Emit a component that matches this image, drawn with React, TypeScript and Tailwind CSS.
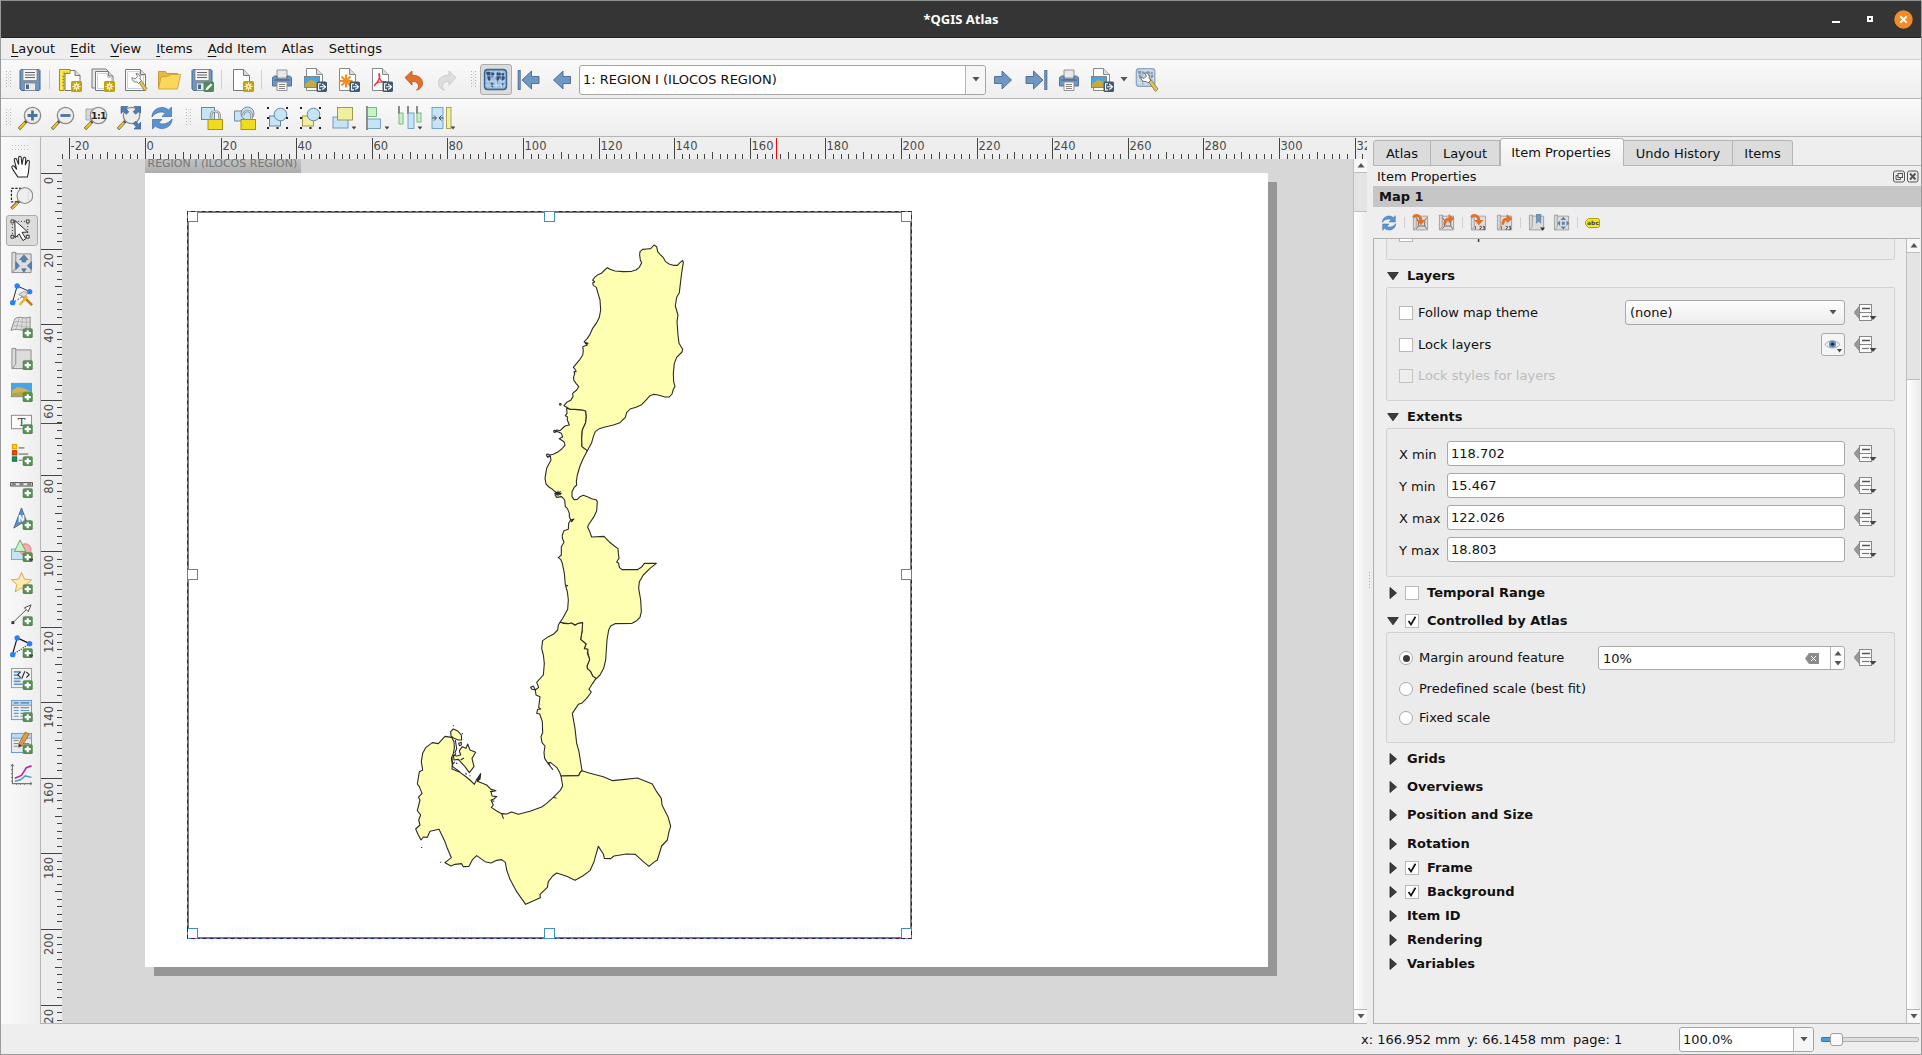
import React from "react";

type Kids = { children?: React.ReactNode };

const Ico = ({ s = 24, children }: Kids & { s?: number }) => (
  <svg width={s} height={s} viewBox="0 0 24 24" fill="none" className="block shrink-0">
    {children}
  </svg>
);

/* ---------- badges ---------- */
const NewBadge = () => (
  <g>
    <rect x="13" y="13" width="11" height="11" rx="1.6" fill="#c4a000" />
    <path d="M18.5 14.2v8.6M14.2 18.5h8.6M15.6 15.6l5.8 5.8M21.4 15.6l-5.8 5.8" stroke="#fff6c8" strokeWidth="1.2" />
    <circle cx="18.5" cy="18.5" r="2.4" fill="#fff6c8" />
    <circle cx="18.5" cy="18.5" r="1" fill="#c4a000" />
  </g>
);
const ExportBadge = () => (
  <g>
    <rect x="13.5" y="13.5" width="10.5" height="10.5" rx="1.6" fill="#3d5a73" />
    <path d="M18 15.7h-2.4v6.2H18M17 18.8h5.2M20.3 16.6l2.2 2.2-2.2 2.2M19.6 15.8v1.4M19.6 20.4v1.4" stroke="#fff" strokeWidth="1.1" />
  </g>
);
const PlusBadge = () => (
  <g>
    <rect x="13.5" y="14" width="10" height="10" rx="1.6" fill="#588f54" stroke="#47793f" strokeWidth=".4" />
    <path d="M18.5 15.8v6.4M15.3 19h6.4" stroke="#fff" strokeWidth="2.3" />
  </g>
);
const DropMark = () => <path d="M19.5 20.5h5l-2.5 3z" fill="#444" />;

/* ---------- toolbar icons ---------- */
const Floppy = () => (
  <g>
    <path d="M3 1.5h18l1 1v19l-1 1H3.500L2 21V2.500z" fill="#6d97c4" stroke="#48698f" strokeWidth="1" />
    <rect x="5" y="1.500" width="14" height="11" fill="#f3f3f3" stroke="#7d7d7d" strokeWidth=".7" />
    <path d="M7 4.500h10M7 7h10M7 9.500h10" stroke="#666" strokeWidth="1" />
    <rect x="6.500" y="15" width="11" height="7.500" fill="#e9e9e9" stroke="#7d7d7d" strokeWidth=".7" />
    <rect x="8" y="16.500" width="3" height="4.500" fill="#48698f" />
  </g>
);
const SaveIcon = () => <Ico><Floppy /></Ico>;
const SaveTemplateIcon = () => (
  <Ico>
    <Floppy />
    <rect x="13.500" y="13.500" width="10.500" height="10.500" rx="1.600" fill="#4e8b57" />
    <path d="M15.500 22.300l.8-2.500 4.500-4.400 1.600 1.600-4.500 4.400z" fill="#fff" />
  </Ico>
);
const NewLayoutIcon = () => (
  <Ico>
    <path d="M7 2.500h10l5 5v15H7z" fill="#fff" stroke="#777" />
    <path d="M17 2.500v5h5" fill="#ddd" stroke="#777" />
    <path d="M1.500 1.500h10.500v4H6v17H1.500z" fill="#fce94f" stroke="#b08900" />
    <path d="M4 8.500h2M4 11.500h2M4 14.500h2M4 17.500h2M6 3.500v2M9 3.500v2" stroke="#b08900" strokeWidth=".8" />
    <NewBadge />
  </Ico>
);
const DuplicateIcon = () => (
  <Ico>
    <path d="M1 1h14l2 2v17H1z" fill="#e6e6e6" stroke="#777" />
    <path d="M4.500 3.500h13l4.500 4.500v14.500H4.500z" fill="#fff" stroke="#777" />
    <path d="M6.500 5.500h10v4h4v11h-14z" stroke="#b5c8e8" strokeWidth=".8" />
    <path d="M17.500 3.500V8H22" fill="#ddd" stroke="#777" />
    <NewBadge />
  </Ico>
);
const ManagerIcon = () => (
  <Ico>
    <path d="M1.500 1.500h15l5 5v16h-20z" fill="#fff" stroke="#777" />
    <path d="M3.500 3.500h12v4h4v13h-16z" stroke="#b5c8e8" strokeWidth=".8" />
    <path d="M16.500 1.500v5h5" fill="#ddd" stroke="#777" />
    <path d="M14.500 13.500l2-2 6.500 9-2.500 2.500z" fill="#e0c35a" stroke="#86762c" strokeWidth=".8" />
    <path d="M8 9.500a4 4 0 0 0 5 4.500l1.500 1.500 3-3-1.500-1.500a4 4 0 0 0-4-5.500l1.500 3-2.500 2.500z" fill="#f4f4f4" stroke="#666" strokeWidth=".8" />
  </Ico>
);
const FolderIcon = () => (
  <Ico>
    <path d="M1.500 20V3.500h7l1.500 2h10.500V20z" fill="#e9b93f" stroke="#b98c1f" strokeWidth=".8" />
    <path d="M1.500 21L4 9l8-1 2-1.500h9.500L20.500 21z" fill="#fbd85b" stroke="#c99d2c" strokeWidth=".8" />
  </Ico>
);
const PageNewIcon = () => (
  <Ico>
    <path d="M3.500 1.500h10l6 6v15h-16z" fill="#fff" stroke="#777" />
    <path d="M13.500 1.500v6h6" fill="#ddd" stroke="#777" />
    <NewBadge />
  </Ico>
);
const PrinterIcon = () => (
  <Ico>
    <path d="M7 2h10v8H7z" fill="#e8e8e8" stroke="#888" strokeWidth=".9" />
    <path d="M2.500 9.500l2-1.500H7v3h10V8h2.500l2 1.500v8.500h-19z" fill="#6d97c4" stroke="#48698f" strokeWidth=".9" />
    <path d="M4 12h16" stroke="#48698f" strokeWidth="1.200" />
    <path d="M7 14h10v8.500H7z" fill="#fafafa" stroke="#888" strokeWidth=".9" />
    <path d="M9 16.500h6M9 18.500h6M9 20.500h6" stroke="#777" strokeWidth=".9" />
  </Ico>
);
const ImageExportIcon = () => (
  <Ico>
    <path d="M3.500 .500h10l6 6v16h-16z" fill="#fff" stroke="#888" />
    <path d="M13.500 .500v6h6" fill="#ddd" stroke="#888" />
    <rect x="1.500" y="8.500" width="15" height="11" fill="#45a5e8" stroke="#777" strokeWidth=".8" />
    <path d="M2 19v-3l6-4.500 8 3.500v4z" fill="#c3ab41" />
    <ExportBadge />
  </Ico>
);
const SvgExportIcon = () => (
  <Ico>
    <path d="M3.500 .500h10l6 6v16h-16z" fill="#fff" stroke="#888" />
    <path d="M13.500 .500v6h6" fill="#ddd" stroke="#888" />
    <path d="M10 6.500v13M3.500 13h13M5.500 8.500l9 9M14.500 8.500l-9 9" stroke="#f38f1d" strokeWidth="2" />
    <ExportBadge />
  </Ico>
);
const PdfExportIcon = () => (
  <Ico>
    <path d="M3.500 .500h10l6 6v16h-16z" fill="#fff" stroke="#888" />
    <path d="M13.500 .500v6h6" fill="#ddd" stroke="#888" />
    <path d="M10 5c2 4-1 9-5 13M10 6c-.500 5 3 8.500 7.500 9.500M6 16c3-2 7-3 11.500-2" stroke="#e8323b" strokeWidth="1.400" />
    <ExportBadge />
  </Ico>
);
const ReturnArrow = ({ fill, stroke }: { fill: string; stroke: string }) => (
  <path d="M3 9.500l7-6.500v4.200c7 0 10.500 3.500 10.500 8 0 3.500-2.500 6-6 7 2-2 2.500-4 1.500-6-1-2-3-3-6-3v4z" fill={fill} stroke={stroke} strokeWidth=".8" />
);
const UndoIcon = () => <Ico><ReturnArrow fill="#e3702d" stroke="#b9531a" /></Ico>;
const RedoIcon = () => (
  <Ico><g transform="matrix(-1 0 0 1 24 0)"><ReturnArrow fill="#dededc" stroke="#c4c4c2" /></g></Ico>
);
const AtlasSheet = () => (
  <g>
    <path d="M2 3.500h20v17H2z" fill="#9fbfe0" />
    <path d="M3 5c3-1 6 0 8 1l-1 3-2 1-1 4-2-1-1-4zM13 5l7 1 1 5-3 3-2-4-2 5-2-4zM7 14l3 2-1 4-2-2zM17 15l3 1-1 3z" fill="#2f5078" />
    <path d="M7.500 3.500v17M12.500 3.500v17M17.500 3.500v17M2 8.500h20M2 13.500h20M2 17.500h20" stroke="#dfeaf5" strokeWidth=".6" />
    <rect x="1.500" y="2.500" width="21" height="19" rx="3" stroke="#3d6696" strokeWidth="1.500" />
  </g>
);
const AtlasIcon = () => <Ico s={25}><AtlasSheet /></Ico>;
const arrow = "M20.500 8.500h-7.500V3L3.500 12 13 21v-5.500h7.500z";
const NavIcon = ({ bar, flip }: { bar?: boolean; flip?: boolean }) => (
  <Ico>
    <g transform={flip ? "matrix(-1 0 0 1 24 0)" : undefined}>
      {bar ? (
        <g>
          <path d="M2.200 2v20" stroke="#48698f" strokeWidth="3" />
          <path d="M2.200 2.500v19" stroke="#6d97c4" strokeWidth="1.400" />
          <path d={arrow} transform="translate(1.500 0)" fill="#6d97c4" stroke="#48698f" strokeWidth=".9" />
        </g>
      ) : (
        <path d={arrow} fill="#6d97c4" stroke="#48698f" strokeWidth=".9" />
      )}
    </g>
  </Ico>
);
const AtlasSettingsIcon = () => (
  <Ico>
    <g opacity=".55"><g transform="translate(0 -1.500) scale(.88 .92)"><AtlasSheet /></g></g>
    <path d="M13 13l2.500-2 7.500 10-2.500 2.500z" fill="#e0c35a" stroke="#86762c" strokeWidth=".8" />
    <path d="M6 9a4 4 0 0 0 5 4.500l2 1.500 3-3-2-1.500a4 4 0 0 0-4.500-5.500l2 3-2.500 2.500z" fill="#fff" stroke="#555" strokeWidth=".8" />
  </Ico>
);
const Lens = ({ children }: Kids) => (
  <g>
    <path d="M8.500 15L1 23" stroke="#4a4a4a" strokeWidth="3.200" />
    <path d="M7 16.500l-5.500 6" stroke="#f5c21b" strokeWidth="2.200" />
    <circle cx="14.500" cy="9.500" r="8.200" fill="#ededeb" stroke="#8c8c8a" strokeWidth="1.300" />
    {children}
  </g>
);
const ZoomInIcon = () => <Ico><Lens><path d="M14.500 4.500v10M9.500 9.500h10" stroke="#48759f" strokeWidth="2.800" /></Lens></Ico>;
const ZoomOutIcon = () => <Ico><Lens><path d="M9.500 9.500h10" stroke="#48759f" strokeWidth="2.800" /></Lens></Ico>;
const ZoomOneIcon = () => (
  <Ico>
    <path d="M2 3h17v11H2z" fill="#d8d8d8" stroke="#999" strokeWidth=".8" />
    <Lens>
      <text x="14.400" y="13" textAnchor="middle" fontSize="9.500" fontWeight="bold" fill="#222" fontFamily="DejaVu Sans" letterSpacing="-.800">1:1</text>
    </Lens>
  </Ico>
);
const ZoomFullIcon = () => (
  <Ico>
    <Lens />
    <path d="M4 .500h7L8.800 2.800l3 3-2.500 2.500-3-3L4 7.500zM24 .500h-7l2.200 2.300-3 3 2.500 2.500 3-3L24 7.500zM24 23h-7l2.200-2.300-3-3 2.500-2.500 3 3L24 16z" fill="#4d7db5" stroke="#35567d" strokeWidth=".6" />
  </Ico>
);
const RefreshGlyph = () => (
  <g>
    <path d="M2 11C2 5 7 1.500 12 1.500c3 0 5 1 6.500 2.500L21.500 1v9.500H12l3.200-3.200C12.500 5 6 5.500 2 11z" fill="#5b93d0" stroke="#3a6ca8" strokeWidth=".7" />
    <path d="M22 13c0 6-5 9.500-10 9.500-3 0-5-1-6.500-2.500L2.500 23v-9.500H12l-3.200 3.200c2.700 2.300 9.200 1.800 13.200-3.700z" fill="#5b93d0" stroke="#3a6ca8" strokeWidth=".7" />
  </g>
);
const RefreshIcon = ({ s = 26 }: { s?: number }) => <Ico s={s}><RefreshGlyph /></Ico>;
const LockIcon = () => (
  <Ico>
    <rect x="1.500" y="1.500" width="13" height="12" fill="#c5e5f7" stroke="#5d7f98" strokeWidth=".9" />
    <path d="M11 14V9.500a4.300 4.300 0 0 1 8.600 0V14" stroke="#8a8a8a" strokeWidth="2.600" />
    <path d="M11 14V9.500a4.300 4.300 0 0 1 8.600 0V14" stroke="#d5d5d5" strokeWidth="1.200" />
    <rect x="8" y="13.500" width="14.500" height="10" fill="#f0dc1e" stroke="#ab930c" />
  </Ico>
);
const UnlockIcon = () => (
  <Ico>
    <path d="M1.500 5h11v10h-11z" fill="#c5e5f7" stroke="#5d7f98" strokeWidth=".9" />
    <circle cx="14.500" cy="7.500" r="6.500" fill="#c5e5f7" stroke="#5d7f98" strokeWidth=".9" />
    <path d="M10.500 9.500a4 4 0 0 1 8-1V14" stroke="#8a8a8a" strokeWidth="2.600" />
    <path d="M10.500 9.500a4 4 0 0 1 8-1V14" stroke="#d5d5d5" strokeWidth="1.200" />
    <rect x="8" y="13.500" width="14.500" height="10" fill="#f0dc1e" stroke="#ab930c" />
  </Ico>
);
const Corners = () => (
  <path d="M1 1h2v2H1zM20 1h2v2h-2zM1 21h2v2H1zM20 21h2v2h-2zM1 11h2v2H1zM20 11h2v2h-2zM10.500 21h2v2h-2z" fill="#222" />
);
const GroupIcon = ({ ungroup }: { ungroup?: boolean }) => (
  <Ico>
    <rect x="3.500" y="10" width="11" height="10" fill={ungroup ? "#f5ef9d" : "#c5e5f7"} stroke={ungroup ? "#999045" : "#5d7f98"} strokeWidth=".9" />
    <circle cx="14.500" cy="8.500" r="6.300" fill="#c5e5f7" stroke="#5d7f98" strokeWidth=".9" />
    <Corners />
  </Ico>
);
const RaiseIcon = () => (
  <Ico>
    <rect x="1" y="11" width="15" height="11" fill="#c5e5f7" stroke="#5d92b8" strokeWidth=".9" />
    <rect x="5.500" y="1.500" width="15" height="12.500" fill="#f1ee9e" stroke="#999045" strokeWidth=".9" />
    <DropMark />
  </Ico>
);
const AlignIcon = () => (
  <Ico>
    <path d="M2 0v24" stroke="#333" strokeWidth="1.100" />
    <rect x="2.500" y="1.500" width="9" height="9" fill="#c5f5c5" stroke="#6ba56b" strokeWidth=".8" />
    <rect x="2.500" y="13" width="13" height="9.500" fill="#c5e5f7" stroke="#5d92b8" strokeWidth=".8" />
    <DropMark />
  </Ico>
);
const DistributeIcon = () => (
  <Ico>
    <path d="M1 0v8M10 0v8M19 0v8" stroke="#333" strokeWidth="1.100" />
    <rect x="1" y="7" width="4" height="11" fill="#c5f5c5" stroke="#6ba56b" strokeWidth=".8" />
    <rect x="10" y="7" width="6" height="15.500" fill="#c5e5f7" stroke="#5d92b8" strokeWidth=".8" />
    <rect x="19" y="7" width="4" height="9" fill="#c5f5c5" stroke="#6ba56b" strokeWidth=".8" />
    <DropMark />
  </Ico>
);
const ResizeIcon = () => (
  <Ico>
    <rect x="1" y="1.500" width="11" height="21" fill="#c5e5f7" stroke="#5d92b8" strokeWidth=".8" />
    <rect x="15.500" y="1.500" width="4.500" height="21" fill="#f1ee9e" stroke="#999045" strokeWidth=".8" />
    <path d="M1 12h4M3 9.500L5.500 12 3 14.500M12.500 12h-4M10.500 9.500L8 12l2.500 2.500" stroke="#444" />
    <DropMark />
  </Ico>
);

/* ---------- toolbox icons ---------- */
const toolIcons: React.ReactNode[] = [
  <path key="pan" d="M8 23c-1-3-4-5-6-10-.5-1.500 1.500-2.500 2.800-.8L7 15 4.500 5.500C4 3.500 6.500 3 7 4.800L9 10V2.800C9 .8 11.500.8 11.700 2.800L12.500 10l1.300-6.500c.4-1.800 2.800-1.300 2.600.5L16 10.500l1.700-4c.7-1.600 2.800-1 2.500.8C19.500 13 20 18 18 23z" fill="#fff" stroke="#222" strokeWidth="1.100" />,
  <g key="zoom">
    <path d="M1.500 1.500h14v14h-14z" stroke="#222" strokeWidth="1.300" strokeDasharray="2.500 1.500" />
    <path d="M9 15l-7.500 7.500" stroke="#4a4a4a" strokeWidth="3.200" />
    <path d="M8 16.500l-6 6" stroke="#f0b92b" strokeWidth="2.200" />
    <circle cx="15.500" cy="9" r="8.200" fill="#eeeeec" stroke="#8c8c8a" strokeWidth="1.200" />
    <path d="M19 5v9" stroke="#ccc" strokeDasharray="2 1.500" />
  </g>,
  <g key="select">
    <path d="M2.500 2.500h16v16h-16z" stroke="#222" strokeDasharray="1 2" />
    <path d="M1 1h3v3H1zM17 1h3v3h-3zM1 17h3v3H1zM17 17h3v3h-3z" fill="#eee" stroke="#222" strokeWidth=".9" />
    <path d="M5 1.500l13.500 12-6 .5 4 6.500-3 2-4-7-4 4z" fill="#fff" stroke="#222" />
  </g>,
  <g key="move">
    <path d="M2 1.500h4V3h16v19.500H2z" fill="#ddd" stroke="#8a8a8a" />
    <path d="M6 2v16c-1 1-2 2-3 4" stroke="#8a8a8a" />
    <path d="M14.500 4l4.500 5h-2.500v2.500h-4V9H10zM6 11l4 4.500-4 4zM22.500 11v8.500l-4.500-4zM12 18.500h5l-2.500 4z" fill="#5580b0" stroke="#3a5d88" strokeWidth=".5" />
  </g>,
  <g key="nodes">
    <path d="M7.500 3L2.500 20.500M7.500 3l13 6" stroke="#222" />
    <path d="M21 9L3 20.500" stroke="#222" strokeDasharray="1.500 2" />
    <circle cx="7.500" cy="3" r="2.800" fill="#2a7fff" /><circle cx="20.500" cy="9" r="2.800" fill="#2a7fff" /><circle cx="2.800" cy="20.500" r="2.800" fill="#2a7fff" />
    <path d="M12 12l11 11" stroke="#b77b1b" strokeWidth="2.600" /><path d="M18 14L10 23" stroke="#e8b82b" strokeWidth="2.600" />
    <path d="M9 12l5-3 5 1-4 5z" fill="#ddd" stroke="#888" strokeWidth=".8" />
  </g>,
  <g key="map3d">
    <path d="M5 4c5-4 10 1 16-2v14c-6 2-12-3-20 0z" fill="#ddd" stroke="#8a8a8a" />
    <path d="M4 8c6-3 10 1 17-1M2.500 12c6-3 12 2 18.500 0M9.500 2.500L6.500 14.500M13 2.500l-1 13M17 3v13" stroke="#aaa" strokeWidth=".8" />
    <PlusBadge />
  </g>,
  <g key="map">
    <path d="M2 1.500h4V3h16v19.500H2z" fill="#dcdcdc" stroke="#8a8a8a" />
    <path d="M6 2v16c-1 1-2 2-3 4" stroke="#8a8a8a" />
    <PlusBadge />
  </g>,
  <g key="picture">
    <rect x="1.500" y="4.500" width="21" height="14" fill="#45a5e8" stroke="#888" strokeWidth=".9" />
    <path d="M2 18v-6l6-4 7 2 7 3v5z" fill="#c9b458" />
    <path d="M2 18v-3l20-3v6z" fill="#a78f36" opacity=".5" />
    <PlusBadge />
  </g>,
  <g key="label">
    <rect x="1.500" y="4.500" width="21" height="14" fill="#fbfbfb" stroke="#888" />
    <text x="12" y="16" textAnchor="middle" fontSize="12" fontFamily="DejaVu Serif" fill="#444">T</text>
    <PlusBadge />
  </g>,
  <g key="legend">
    <rect x="2.500" y="1.500" width="4.500" height="4.500" fill="#ffd500" stroke="#e09a00" /><rect x="2.500" y="8" width="4.500" height="4.500" fill="#ff4400" stroke="#b33600" /><rect x="2.500" y="14.500" width="4.500" height="4.500" fill="#0c9b56" stroke="#08693a" />
    <path d="M9 5h6M9 11.500h10M9 18h4" stroke="#999" strokeWidth="1.800" />
    <PlusBadge />
  </g>,
  <g key="scale">
    <rect x=".7" y="8" width="22.600" height="3.500" fill="#eee" stroke="#444" />
    <path d="M2 9.700h4M10 9.700h4M18 9.700h4" stroke="#777" strokeWidth="2.200" />
    <PlusBadge />
  </g>,
  <g key="north">
    <path d="M12 1l8 21-8-5-8 5z" fill="#6490bf" stroke="#3b5f88" strokeWidth=".9" />
    <text x="12" y="15.500" textAnchor="middle" fontSize="8.500" fontWeight="bold" fill="#fff" fontFamily="DejaVu Sans">N</text>
    <PlusBadge />
  </g>,
  <g key="shape">
    <rect x="1.500" y="10.500" width="14" height="11" fill="#c5e5f7" stroke="#6ba3cc" strokeWidth=".9" />
    <circle cx="16" cy="11" r="6" fill="#f5aeae" stroke="#d77474" strokeWidth=".9" />
    <path d="M10.500 1l6 12h-12z" fill="#c5f5c5" stroke="#5d9b5d" strokeWidth=".9" />
    <PlusBadge /><DropMark />
  </g>,
  <g key="marker">
    <path d="M12 1.500l3 7 7.500.7-5.700 5 1.800 7.600L12 17.800l-6.600 4 1.800-7.600-5.700-5 7.500-.7z" fill="#fceaae" stroke="#d69a4e" strokeWidth=".9" />
    <PlusBadge />
  </g>,
  <g key="arrow">
    <path d="M3 20.500L20 4" stroke="#555" />
    <path d="M1.500 19h3v3h-3z" fill="#333" /><path d="M22 2l-7 3 4 4z" fill="#fff" stroke="#444" />
    <PlusBadge />
  </g>,
  <g key="polyline">
    <path d="M7.500 3L2.500 20.500M7.500 3l13 6" stroke="#111" strokeWidth="1.200" />
    <path d="M20.500 9L3 20.500" stroke="#111" strokeWidth="1.200" strokeDasharray="1 1.500" />
    <circle cx="7.500" cy="3" r="2.800" fill="#2a7fff" /><circle cx="20.500" cy="9" r="2.800" fill="#2a7fff" /><circle cx="2.800" cy="20.500" r="2.800" fill="#2a7fff" />
    <PlusBadge /><DropMark />
  </g>,
  <g key="html">
    <rect x="1.500" y="1.500" width="21" height="20" fill="#f1f1f1" stroke="#999" />
    <path d="M4 5h7M4 8.500h5M4 12h9M4 15h7M4 18h9" stroke="#6795c4" strokeWidth="1.800" />
    <path d="M11 5L8 8l3 3M17 5l3 3-3 3M15.500 4.500l-3 7" stroke="#222" strokeWidth="1.100" />
    <PlusBadge />
  </g>,
  <g key="table">
    <rect x="1.500" y="1.500" width="21" height="20" fill="#eee" stroke="#6795c4" />
    <path d="M2 2h20v4H2z" fill="#b9d9ef" /><path d="M2 6.500h20" stroke="#6795c4" />
    <path d="M4 4h5M11 4h9" stroke="#4a7bb0" strokeWidth="1.400" />
    <path d="M4 9h5M11 9h9M4 12h5M11 12h9M4 15h5M11 15h3M4 18h5M11 18h2" stroke="#6795c4" strokeWidth="1.200" />
    <PlusBadge />
  </g>,
  <g key="fixedtable">
    <rect x="1.500" y="2.500" width="21" height="20" fill="#e6e9ee" stroke="#6795c4" />
    <path d="M2 3h20v4H2z" fill="#b9d9ef" /><path d="M2 7.500h20" stroke="#6795c4" />
    <path d="M4 10h5M4 13h5M4 16h4M11 13h9" stroke="#888" strokeWidth="1.100" />
    <path d="M16 1l4 2.500-7.500 12L9 17l.3-4z" fill="#e09a45" stroke="#9b5f1c" strokeWidth=".8" /><path d="M9 17l.3-4 3.200 2.500z" fill="#444" />
    <PlusBadge />
  </g>,
  <g key="profile">
    <path d="M2.500 1v20.500H23" stroke="#777" strokeWidth="1.200" /><path d="M1 3.500L2.500 1 4 3.500M21 20l2 1.500L21 23M1 7h2M1 11h2M1 15h2M1 19h2M7 23v-2M11 23v-2M15 23v-2" stroke="#777" />
    <path d="M5 16l7-3 5-8 5.500-2" stroke="#b92ba0" strokeWidth="1.700" /><path d="M5 19l6-1.500 5-4 6.500 1.500" stroke="#4aa3bd" strokeWidth="1.600" />
  </g>,
];

/* ---------- shared widgets ---------- */
const Cell = ({ on, w, children }: Kids & { on?: boolean; w?: string }) => (
  <div className={`flex h-[31px] shrink-0 items-center justify-center ${w ?? "w-[33px]"}`}>
    {on ? (
      <div className="flex h-[31px] w-[32px] items-center justify-center rounded-[3px] border border-[#ababab] bg-[#dcdcdc]">{children}</div>
    ) : (
      children
    )}
  </div>
);
const Sep = () => <div className="flex w-[7px] shrink-0 justify-center"><div className="h-[19px] w-px bg-[#d0d0d0]" /></div>;
const Handle = () => (
  <svg width="5" height="18" className="block shrink-0">
    <path d="M.5 0v18M4.500 0v18" stroke="#b4b4b4" strokeDasharray="1 2" />
    <path d="M2.500 1.500v15" stroke="#cfcfcf" strokeDasharray="1 2" />
  </svg>
);
const Tri = ({ dir = "down", c = "#555" }: { dir?: "up" | "down"; c?: string }) => (
  <svg width="8" height="5" viewBox="0 0 8 5" className="block"><path d={dir === "down" ? "M.5 0h7L4 4.500z" : "M.5 4.500h7L4 0z"} fill={c} /></svg>
);
const Check = ({ on, off }: { on?: boolean; off?: boolean }) => (
  <span className={`flex size-[14px] shrink-0 items-center justify-center border ${off ? "border-[#c3c3c3] bg-[#ededed]" : "border-[#b9b9b9] bg-white"}`}>
    {on && <svg width="10" height="10" viewBox="0 0 10 10" fill="none"><path d="M1.500 5l2.500 3.500L8.500 .8" stroke="#111" strokeWidth="1.700" /></svg>}
  </span>
);
const Radio = ({ on }: { on?: boolean }) => (
  <span className="flex size-[14px] shrink-0 items-center justify-center rounded-full border border-[#a9a9a9] bg-white">
    {on && <span className="size-[7px] rounded-full bg-[#3a3a3a]" />}
  </span>
);
const Override = () => (
  <svg width="24" height="20" viewBox="0 0 24 20" className="block shrink-0" fill="none">
    <path d="M0 9.500L5.500 3v13z" fill="#999" stroke="#777" strokeWidth=".6" />
    <rect x="5.500" y="1.500" width="12" height="16" fill="#fbfbfb" stroke="#888" />
    <path d="M5.500 9.500h12" stroke="#888" /><path d="M8 5.500h8" stroke="#555" strokeWidth="1.500" /><path d="M8 13.500h7" stroke="#777" strokeWidth="1.200" />
    <path d="M15.500 13h7L19 17z" fill="#444" />
  </svg>
);
const Header = ({ h, label, open, check }: { h: string; label: string; open?: boolean; check?: "on" | "off" }) => (
  <div className={`flex items-center pl-[13px] font-bold ${h}`}>
    <svg width="12" height="12" viewBox="0 0 12 12" className="shrink-0"><path d={open ? "M.7 2.500h10.600L6 9.800z" : "M3 .5v11l6.500-5.500z"} fill="#3c3c3e" stroke="#222" strokeWidth=".8" /></svg>
    {check ? <span className="ml-[6px] mr-[8px]"><Check on={check === "on"} /></span> : <span className="w-[8px]" />}
    <span>{label}</span>
  </div>
);
const Box = ({ h, children }: Kids & { h: string }) => (
  <div className={`ml-[12px] w-[509px] rounded-[2px] border border-[#d2d2d2] bg-[#ebebeb] ${h}`}>{children}</div>
);
const Scroll = ({ gap }: { gap: string }) => (
  <div className="flex w-[14px] shrink-0 flex-col border-l border-[#bdbdbd]">
    <div className="flex h-[13px] items-center justify-center bg-[#f8f8f8]"><Tri dir="up" /></div>
    <div className={`border-y border-[#bdbdbd] bg-[#e4e4e4] ${gap}`} />
    <div className="flex-1 bg-linear-to-r from-white to-[#ececec]" />
    <div className="flex h-[14px] items-center justify-center border-t border-[#b5b5b5] bg-[#f8f8f8]"><Tri /></div>
  </div>
);

/* ---------- rulers ---------- */
const MM = 3.78;
const ticks = Array.from({ length: 200 }, (_, i) => i * 2 - 40);
const HRuler = () => (
  <svg width="1326" height="21" className="block shrink-0" fontFamily="DejaVu Sans" fontSize="11.5" fill="#4a4a4a">
    {ticks.map((v) => {
      const x = Math.round(145 + v * MM) - 41;
      if (x < 20 || x > 1325) return null;
      const top = v % 20 === 0 ? 0 : v % 10 === 0 ? 14 : 16;
      return (
        <g key={v}>
          <path d={`M${x + 0.5} ${top}V21`} stroke="#444" />
          {v % 20 === 0 && <text x={x + 1.5} y="12">{v}</text>}
        </g>
      );
    })}
    <path d="M735.500 0V21" stroke="#f00" />
  </svg>
);
const VRuler = () => (
  <svg width="21" height="864" className="block shrink-0" fontFamily="DejaVu Sans" fontSize="11.5" fill="#4a4a4a">
    {ticks.map((v) => {
      const y = Math.round(173 + v * MM) - 159;
      if (y < 0 || y > 863) return null;
      const left = v % 20 === 0 ? 0 : v % 10 === 0 ? 14 : 16;
      return (
        <g key={v}>
          <path d={`M${left} ${y + 0.5}H21`} stroke="#444" />
          {v % 20 === 0 && <text transform={`translate(12 ${y + 4}) rotate(-90)`} textAnchor="end">{v}</text>}
        </g>
      );
    })}
    <path d="M0 264.500H21" stroke="#f00" />
  </svg>
);

/* ---------- map drawing ---------- */
const NORTH =
  "M200 562L192 557 200 547 212 541 219 530 218 520 230 510 236 500 228 490 221 480 221 470 224 462 222 455 228 455 227 450 220 442 230 430 240 418 248 405 250 392 248 380 262 375 256 370 264 370 252 366 262 355 270 343 278 325 290 308 298 292 302 270 300 240 294 220 289 202 280 196 278 188 284 186 278 180 284 172 294 164 304 160 314 150 322 143 330 148 345 153 370 155 395 154 408 150 418 142 425 128 421 120 419 105 420 95 428 88 440 87 452 86 462 75 470 80 473 95 480 103 490 113 497 125 507 132 520 136 532 136 540 128 548 121 550 128 547 145 543 175 540 200 538 218 530 232 526 258 534 285 531 305 534 345 537 370 548 388 546 396 530 412 523 430 520 460 521 485 525 500 520 508 516 522 508 531 495 531 475 525 462 523 450 527 440 538 425 554 408 562 390 567 380 578 376 592 360 608 340 615 315 621 298 626 286 635 280 650 275 668 262 692 246 680 245 655 247 630 257 608 259 590 257 573 248 570 225 568 210 568Z";
const SUR =
  "M200 564L210 568 225 568 248 570 257 573 259 590 257 608 247 630 245 655 246 680 262 692 250 715 240 738 232 765 229 785 230 795 222 803 216 815 216 830 222 839 232 838 240 830 250 826 262 830 275 836 288 839 292 845 290 872 282 890 265 915 263 922 268 932 275 951 312 949 328 966 343 978 354 986 355 1000 357 1015 350 1026 356 1030 358 1042 366 1049 412 1049 424 1042 433 1030 469 1030 450 1045 430 1065 418 1085 416 1105 422 1140 424 1175 420 1192 410 1202 396 1210 345 1211 332 1218 326 1230 321 1260 317 1320 311 1345 300 1365 289 1376 278 1369 272 1355 262 1346 261 1338 269 1318 264 1300 262 1288 253 1286 258 1272 242 1258 246 1235 246 1208 225 1214 215 1210 205 1211 180 1208 190 1192 203 1168 205 1140 202 1115 197 1098 203 1097 196 1095 193 1060 187 1030 182 1018 175 1013 184 1005 184 980 192 967 187 955 187 945 192 932 205 928 206 910 212 900 222 897 215 905 208 890 208 880 202 865 196 860 194 840 185 830 170 832 165 825 175 822 165 815 155 806 148 802 138 792 135 775 140 745 153 720 151 708 143 712 140 703 150 705 160 703 175 695 185 687 195 676 192 665 178 656 188 650 184 640 173 635 163 635 170 630 180 632 195 618 208 615 202 600 202 590 196 587 201 580Z";
const UNION =
  "M510 67L520 70 535 71 545 69 555 76 565 70 578 68 576 95 572 118 588 132 583 146 594 148 592 160 599 178 591 198 592 206 602 215 608 228 618 235 608 250 597 268 604 276 590 295 575 310 565 313 547 340 555 385 560 430 567 455 576 512 570 518 566 527 513 528 508 515 500 502 482 488 476 488 480 498 488 508 475 492 464 475 462 458 465 438 456 428 453 410 458 398 457 365 449 342 440 340 443 328 452 327 446 322 450 290 438 285 436 270 426 268 422 262 430 258 436 270 446 262 440 247 460 225 463 190 460 165 455 145 458 122 475 110 490 103 503 90 505 75Z";
const PANGASINAN =
  "M576 512L600 520 640 530 668 542 705 538 742 534 765 543 787 552 800 575 814 595 816 615 834 650 842 679 837 695 832 720 815 738 802 780 790 788 777 799 760 785 736 763 710 762 672 768 662 776 643 775 640 762 625 739 612 785 600 812 578 828 555 841 530 829 500 819 488 828 475 845 472 862 450 883 451 893 407 913 380 875 360 838 350 810 346 787 335 779 320 781 303 789 285 785 260 767 248 778 237 799 220 800 215 791 195 793 183 798 165 788 184 773 172 745 165 725 147 688 120 694 112 712 100 711 93 720 85 705 77 687 90 675 86 660 92 645 82 632 90 600 85 592 96 580 88 560 82 552 88 515 98 510 94 485 98 460 108 442 127 428 145 431 165 409 185 412 192 425 193 445 190 460 184 475 187 490 186 507 210 517 225 528 240 540 253 553 262 535 266 545 290 555 303 568 318 572 303 575 306 588 320 590 312 597 303 600 310 615 304 622 320 633 335 641 340 655 335 641 350 642 365 636 385 643 420 634 455 621 470 610 490 592 498 594 490 592 510 572 518 558 515 540 513 528 566 527 570 518Z";
const ISLANDS =
  "M182 395L190 387 202 392 214 405 215 420 205 420 192 415 183 408ZM190 465L200 468 212 465 208 452 217 440 228 445 233 432 240 450 257 457 246 475 252 500 238 518 225 500 205 478 192 480ZM206 430l8 -3 0 8 -6 2z";

const Canvas = () => (
  <svg width="1292" height="864" viewBox="62 159 1292 864" className="block shrink-0">
    <defs>
      <linearGradient id="tag" x1="0" x2="0" y1="0" y2="1"><stop stopColor="#c4c4c4" /><stop offset="1" stopColor="#adadad" /></linearGradient>
    </defs>
    <rect x="62" y="159" width="1292" height="864" fill="#d7d7d7" />
    <rect x="154" y="182" width="1123" height="794" fill="#969696" />
    <rect x="145" y="173" width="1123" height="794" fill="#fff" />
    <rect x="145" y="159" width="156" height="14" fill="url(#tag)" />
    <text x="147.500" y="167" fontFamily="DejaVu Sans" fontSize="11" fill="#777">REGION I (ILOCOS REGION)</text>
    <g fill="#ffffb2" stroke="#2b2b2b" strokeWidth="3.300" strokeLinejoin="round">
      <g transform="translate(500 220) scale(.33333)">
        <path d={SUR} />
        <path d={NORTH} />
        <circle cx="181" cy="553" r="2.500" /><circle cx="164" cy="634" r="3" /><circle cx="144" cy="706" r="4" />
        <path d="M166 815l16 10M166 826l16 -12M174 812v16M163 820h22" fill="none" />
      </g>
      <g transform="translate(390 600) scale(.33333)">
        <path d={UNION} />
        <path d={PANGASINAN} />
        <path d={ISLANDS} />
        <path d="M262 545l2 -12 8 -12 -2 16 -8 6z" fill="#2b2b2b" />
        <path d="M190 376v3M217 399v4M95 741v3M152 785v3M165 787h3M228 518v6M198 490h4M188 492l6 -6M240 526v3M192 468l6 -8M186 470l2 30 22 16M196 420l4 26 -6 14M212 480l10 -6M300 575l8 -3M305 602l8 2" fill="none" />
      </g>
    </g>
    <rect x="188.500" y="212.500" width="722" height="725" fill="none" stroke="#777" />
    <rect x="187.500" y="211.500" width="724" height="727" fill="none" stroke="#3a9fd6" />
    <rect x="187.500" y="211.500" width="724" height="727" fill="none" stroke="#6a0638" strokeDasharray="4 3" />
    <g fill="#fff" stroke="#3e8fc4">
      {[187.5, 544.5, 901.5].map((x) =>
        [211.5, 569.5, 928.5].map((y) => (x === 544.5 && y === 569.5 ? null : <rect key={`${x}-${y}`} x={x} y={y} width="10" height="10" />)),
      )}
    </g>
    <path d="M187.500 222V211.500H198M901 211.500h10.500V222M187.500 928v10.500H198M901 938.500h10.500V928" fill="none" stroke="#6a0638" strokeDasharray="4 3" />
  </svg>
);

/* ---------- property panel icons ---------- */
const MapScroll = () => (
  <g><path d="M2 1.500h4V3h16v19.500H2z" fill="#dcdcdc" stroke="#8a8a8a" /><path d="M6 2v16c-1 1-2 2-3 4" stroke="#8a8a8a" /></g>
);
const PanelIcon = ({ kind }: { kind: string }) => (
  <Ico s={17}>
    <MapScroll />
    {kind.startsWith("ext") && <path d="M9 9h9v8H9zM6 5l3 4M21 5l-3 4M6 21l3-4M21 21l-3-4" stroke="#666" strokeWidth="1.300" />}
    {kind.startsWith("sc") && <path d="M7.500 17v5M11 18h.1M11 21h.1M13.500 17.500h2.500v2l-2.500 2H16M18 17.500h2.500V22H18M18.500 19.700h2" stroke="#555" strokeWidth="1.300" />}
    {kind.endsWith("In") && (
      <g>
        <path d="M2 5c2-4 10-4.500 10.500 4" stroke="#e3702d" strokeWidth="4" />
        <path d="M6 8.500h13L12.500 16z" fill="#e3702d" />
      </g>
    )}
    {kind.endsWith("Out") && (
      <g>
        <path d="M9.500 15c0-5 2-8 7-8" stroke="#e3702d" strokeWidth="4" />
        <path d="M15 0v13.500l8-6.700z" fill="#e3702d" />
      </g>
    )}
    {kind === "book" && <g><path d="M12 0h6v13l-3-3-3 3z" fill="#6d97c4" stroke="#48698f" strokeWidth=".7" /><path d="M17 19h7l-3.500 4.500z" fill="#333" /></g>}
    {kind === "interact" && <path d="M14.500 4l4 4.500h-8zM6 13l4-4v8zM23 13l-4-4v8zM14.500 22l4-4.500h-8zM12.500 11h4v4h-4z" fill="#5580b0" />}
  </Ico>
);
const PSep = ({ w }: { w: string }) => <div className={`flex justify-center ${w}`}><div className="h-[11px] w-px bg-[#cfcfcf]" /></div>;

const extents = [["X min", "118.702"], ["Y min", "15.467"], ["X max", "122.026"], ["Y max", "18.803"]];
const tabBase = "flex items-center justify-center border border-[#b5b5b5] pt-[2px]";

const Panel = () => (
  <div className="flex w-[548px] shrink-0 flex-col">
    <div className="flex h-[28px] items-end">
      <div className={`${tabBase} h-[26px] w-[58px] rounded-tl-[3px] bg-[#dcdcdc]`}>Atlas</div>
      <div className={`${tabBase} -ml-px h-[26px] w-[70px] bg-[#dcdcdc]`}>Layout</div>
      <div className="flex h-[28px] w-[124px] items-center justify-center rounded-t-[3px] border-x border-t border-[#b5b5b5] bg-linear-to-b from-[#fbfbfb] to-[#efefef] pr-[2px]">Item Properties</div>
      <div className={`${tabBase} h-[26px] w-[109px] border-l-0 bg-[#dcdcdc]`}>Undo History</div>
      <div className={`${tabBase} h-[26px] w-[60px] rounded-tr-[3px] border-l-0 bg-[#dcdcdc]`}>Items</div>
      <div className="h-px flex-1 bg-[#b5b5b5]" />
    </div>
    <div className="flex h-[20px] items-center pl-[4px] pr-[2px] pt-px">
      <span className="flex-1">Item Properties</span>
      <svg width="26" height="13" viewBox="0 0 26 13" fill="none" stroke="#555">
        <rect x=".500" y="1" width="11" height="11" rx="2" /><rect x="5" y="3.500" width="4.500" height="4" /><path d="M5 5.500H3v4h4.500v-2" />
        <rect x="14.500" y="1" width="10.500" height="11" rx="2" /><path d="M17 3.500l5.500 6M22.500 3.500l-5.500 6" strokeWidth="1.900" />
      </svg>
    </div>
    <div className="flex h-[21px] items-center bg-[#c6c6c6] pl-[6px] font-bold">Map 1</div>
    <div className="flex h-[31px] items-center pl-[8px]">
      <RefreshIcon s={16} /><PSep w="w-[15px]" />
      <PanelIcon kind="extIn" /><span className="w-[9px]" /><PanelIcon kind="extOut" /><PSep w="w-[15px]" />
      <PanelIcon kind="scIn" /><span className="w-[9px]" /><PanelIcon kind="scOut" /><PSep w="w-[15px]" />
      <PanelIcon kind="book" /><span className="w-[8px]" /><PanelIcon kind="interact" /><PSep w="w-[15px]" />
      <svg width="15" height="10" viewBox="0 0 15 10"><path d="M3.500 .5h9a2 2 0 0 1 2 2v5a2 2 0 0 1-2 2h-9L.5 6.500v-3z" fill="#fbe62c" stroke="#b09c10" /><text x="8" y="7.300" textAnchor="middle" fontSize="6" fontWeight="bold" fontFamily="DejaVu Sans" fill="#444">abc</text></svg>
    </div>
    <div className="mr-px flex h-[786px] border-b border-l border-t border-[#b0b0b0]">
      <div className="h-[784px] flex-1 overflow-hidden">
        <div className="ml-[12px] flex h-[21px] w-[509px] items-start overflow-hidden rounded-b-[2px] border-x border-b border-[#d2d2d2] bg-[#ebebeb] pl-[12px]">
          <div className="-mt-[12px] flex items-center gap-[5px]"><Check /><span>Draw map canvas items</span></div>
        </div>
        <Header h="h-[27px] pt-[5px]" label="Layers" open />
        <Box h="h-[114px]">
          <div className="mt-[12px] flex h-[25px] items-center pl-[12px]">
            <Check /><span className="ml-[5px] w-[207px]">Follow map theme</span>
            <div className="flex h-[25px] w-[220px] items-center justify-between rounded-[3px] border border-[#a9a9a9] bg-linear-to-b from-[#fdfdfd] to-[#ededed] pl-[4px] pr-[7px]">(none)<Tri /></div>
            <span className="ml-[9px]"><Override /></span>
          </div>
          <div className="mt-[7px] flex h-[25px] items-center pl-[12px]">
            <Check /><span className="ml-[5px] w-[403px]">Lock layers</span>
            <div className="flex h-[23px] w-[24px] items-center justify-center rounded-[3px] border border-[#a9a9a9] bg-[#f5f5f5]">
              <svg width="18" height="16" viewBox="0 0 18 16" fill="none"><path d="M1 7.500C4 2.500 12 2.500 16 7.500 12 12 5 12 1 7.500z" fill="#f2f2ee" stroke="#aaa" /><circle cx="8.500" cy="7.200" r="3.600" fill="#6490bf" /><circle cx="8.500" cy="7.200" r="1.600" fill="#1c2c44" /><path d="M13 12h5l-2.500 3.500z" fill="#444" /></svg>
            </div>
            <span className="ml-[9px]"><Override /></span>
          </div>
          <div className="mt-[6px] flex h-[25px] items-center pl-[12px] text-[#bcbcbc]"><Check off /><span className="ml-[5px]">Lock styles for layers</span></div>
        </Box>
        <Header h="h-[27px] pt-[4px]" label="Extents" open />
        <Box h="h-[149px]">
          <div className="flex flex-col gap-[7px] pt-[12px]">
            {extents.map(([k, v]) => (
              <div key={k} className="flex h-[25px] items-center pl-[12px]">
                <span className="w-[48px] pt-[2px]">{k}</span>
                <div className="flex h-[25px] w-[398px] items-center rounded-[3px] border border-[#a9a9a9] bg-white pl-[3px]">{v}</div>
                <span className="ml-[9px]"><Override /></span>
              </div>
            ))}
          </div>
        </Box>
        <Header h="h-[29px] pt-[2px]" label="Temporal Range" check="off" />
        <Header h="h-[26px] pt-[3px]" label="Controlled by Atlas" open check="on" />
        <Box h="h-[111px]">
          <div className="mt-[13px] flex h-[24px] items-center pl-[12px]">
            <Radio on /><span className="ml-[6px] w-[179px]">Margin around feature</span>
            <div className="flex h-[24px] w-[247px] items-center rounded-[3px] border border-[#a9a9a9] bg-white pl-[4px]">
              <span className="flex-1 pt-px">10%</span>
              <svg width="14" height="11" viewBox="0 0 14 11" className="mr-[11px]"><path d="M4 0h10v11H4L0 5.500z" fill="#8c8c8c" /><path d="M6 3l5 5M11 3L6 8" stroke="#fff" /></svg>
              <div className="flex h-full w-[14px] flex-col items-center justify-center gap-[5px] border-l border-[#b5b5b5]"><Tri dir="up" /><Tri /></div>
            </div>
            <span className="ml-[9px]"><Override /></span>
          </div>
          <div className="flex h-[37px] items-center gap-[6px] pl-[12px]"><Radio />Predefined scale (best fit)</div>
          <div className="flex h-[21px] items-center gap-[6px] pl-[12px]"><Radio />Fixed scale</div>
        </Box>
        <Header h="h-[30px] pt-[2px]" label="Grids" />
        <Header h="h-[28px]" label="Overviews" />
        <Header h="h-[28px]" label="Position and Size" />
        <Header h="h-[27px] pt-[3px]" label="Rotation" />
        <Header h="h-[24px]" label="Frame" check="on" />
        <Header h="h-[24px]" label="Background" check="on" />
        <Header h="h-[24px]" label="Item ID" />
        <Header h="h-[24px]" label="Rendering" />
        <Header h="h-[24px]" label="Variables" />
      </div>
      <Scroll gap="h-[128px]" />
    </div>
  </div>
);

const menus = [
  ["Layout", "L", "ayout"], ["Edit", "E", "dit"], ["View", "V", "iew"], ["Items", "I", "tems"], ["Add Item", "A", "dd Item"], ["Atlas", "", "Atlas"], ["Settings", "", "Settings"],
];

export default function App() {
  return (
    <div className="flex h-[1055px] w-[1922px] flex-col overflow-hidden border-x border-b border-[#9a9a9a] bg-[#eeeeee] font-['DejaVu_Sans',sans-serif] text-[13px] leading-[16px] text-[#111]">
      <div className="flex h-[38px] shrink-0 items-center border-b border-t border-b-[#222] border-t-[#8f9090] bg-[#353535] text-white">
        <div className="w-[180px]" />
        <div className="flex-1 text-center font-['Noto_Sans',sans-serif] text-[13px] font-bold">*QGIS Atlas</div>
        <div className="flex w-[180px] items-center justify-end pr-[8px]">
          <div className="mr-[27px] mt-[6px] h-[2px] w-[8px] bg-white" />
          <div className="mr-[21px] size-[6px] border-2 border-white" />
          <svg width="19" height="19" viewBox="0 0 19 19"><circle cx="9.500" cy="9.500" r="9.200" fill="#f58a27" /><path d="M6.300 6.300l6.400 6.400M12.700 6.300l-6.400 6.400" stroke="#fff" strokeWidth="2" /></svg>
        </div>
      </div>
      <div className="flex h-[22px] shrink-0 items-center gap-[15px] border-b border-[#cfcfcf] pl-[10px]">
        {menus.map(([k, u, rest]) => (
          <span key={k}>{u && <span className="underline underline-offset-[3px]">{u}</span>}{rest}</span>
        ))}
      </div>
      <div className="flex h-[39px] shrink-0 items-center border-b border-[#b5b5b5] bg-linear-to-b from-[#fafafa] to-[#eeeeee] pl-[5px] pt-px">
        <Handle /><span className="w-[2px]" />
        <Cell><SaveIcon /></Cell><Sep />
        <Cell><NewLayoutIcon /></Cell><Cell><DuplicateIcon /></Cell><Cell><ManagerIcon /></Cell><Cell><FolderIcon /></Cell><Cell><SaveTemplateIcon /></Cell><Sep />
        <Cell><PageNewIcon /></Cell><Sep />
        <Cell><PrinterIcon /></Cell><Cell><ImageExportIcon /></Cell><Cell><SvgExportIcon /></Cell><Cell><PdfExportIcon /></Cell><Cell><UndoIcon /></Cell><Cell><RedoIcon /></Cell>
        <Cell w="w-[16px] pl-[4px]"><Handle /></Cell>
        <Cell on><AtlasIcon /></Cell><Cell><NavIcon bar /></Cell><Cell><NavIcon /></Cell>
        <div className="ml-[1px] flex h-[30px] w-[407px] shrink-0 items-stretch rounded-[3px] border border-[#a5a5a5] bg-white">
          <span className="flex flex-1 items-center pl-[3px]">1: REGION I (ILOCOS REGION)</span>
          <span className="flex w-[20px] items-center justify-center rounded-r-[3px] border-l border-[#b5b5b5] bg-[#f6f6f6]"><Tri /></span>
        </div>
        <Cell><NavIcon flip /></Cell><Cell><NavIcon flip bar /></Cell><Cell><PrinterIcon /></Cell><Cell><ImageExportIcon /></Cell>
        <Cell w="w-[12px]"><Tri /></Cell><Cell><AtlasSettingsIcon /></Cell>
      </div>
      <div className="flex h-[38px] shrink-0 items-center border-b border-[#b5b5b5] bg-linear-to-b from-[#fafafa] to-[#eeeeee] pl-[5px]">
        <Handle /><span className="w-[2px]" />
        <Cell><ZoomInIcon /></Cell><Cell><ZoomOutIcon /></Cell><Cell><ZoomOneIcon /></Cell><Cell><ZoomFullIcon /></Cell><Cell><RefreshIcon s={24} /></Cell>
        <Cell w="w-[17px] pl-[4px]"><Handle /></Cell>
        <Cell><LockIcon /></Cell><Cell><UnlockIcon /></Cell><Cell><GroupIcon /></Cell><Cell><GroupIcon ungroup /></Cell><Cell><RaiseIcon /></Cell><Cell><AlignIcon /></Cell><Cell><DistributeIcon /></Cell><Cell><ResizeIcon /></Cell>
      </div>
      <div className="flex h-[887px] shrink-0">
        <div className="flex w-[40px] shrink-0 flex-col items-center border-r border-[#b5b5b5] bg-linear-to-r from-[#fafafa] to-[#eeeeee]">
          <div className="flex h-[13px] items-end justify-center">
            <svg width="18" height="5" className="block"><path d="M0 .5h18M0 4.500h18" stroke="#bbb" strokeDasharray="1 2" /></svg>
          </div>
          {toolIcons.map((icon, i) => (
            <div key={i} className="flex h-[32px] w-full items-center justify-center pl-[2px]">
              <div className={`flex h-[31px] w-[32px] items-center justify-center rounded-[3px] ${i === 2 ? "border border-[#ababab] bg-[#dcdcdc]" : ""}`}><Ico s={23}>{icon}</Ico></div>
            </div>
          ))}
        </div>
        <div className="flex w-[1326px] shrink-0 flex-col pt-px">
          <HRuler />
          <div className="flex h-[864px] w-[1326px]">
            <VRuler />
            <div className="w-[1291px] shrink-0 overflow-hidden"><Canvas /></div>
            <Scroll gap="h-[40px]" />
          </div>
          <div className="h-px bg-[#b5b5b5]" />
        </div>
        <div className="flex w-[6px] shrink-0 items-center justify-end"><svg width="5" height="18"><path d="M1.500 0v18" stroke="#aaa" strokeDasharray="1 2" /></svg></div>
        <div className="pt-px"><Panel /></div>
      </div>
      <div className="flex h-[30px] shrink-0 items-center pl-[1360px] pt-px">
        <span className="w-[106px] whitespace-nowrap">x: 166.952 mm</span>
        <span className="w-[106px] whitespace-nowrap">y: 66.1458 mm</span>
        <span className="w-[106px]">page: 1</span>
        <div className="flex h-[25px] w-[135px] items-stretch rounded-[3px] border border-[#a5a5a5] bg-white">
          <span className="flex flex-1 items-center pl-[3px]">100.0%</span>
          <span className="flex w-[20px] items-center justify-center rounded-r-[3px] border-l border-[#b5b5b5] bg-[#f6f6f6]"><Tri /></span>
        </div>
        <div className="ml-[7px] flex w-[98px] items-center">
          <div className="h-[5px] w-[9px] rounded-l-[2px] border border-r-0 border-[#2f78ad] bg-[#3fa0e6]" />
          <div className="size-[13px] rounded-[3px] border border-[#9f9f9f] bg-[#fbfbfb]" />
          <div className="h-[5px] flex-1 rounded-r-[2px] border border-l-0 border-[#b0b0b0] bg-[#dcdcdc]" />
        </div>
      </div>
    </div>
  );
}
